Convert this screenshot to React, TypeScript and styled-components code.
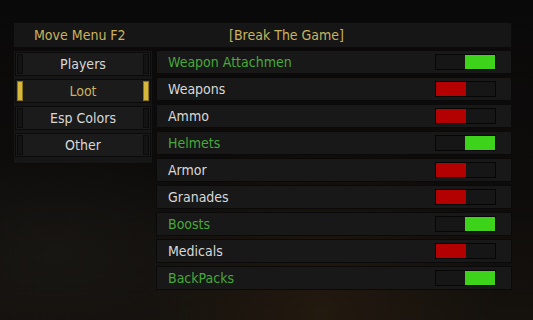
import styled, { createGlobalStyle } from "styled-components";

const GlobalStyle = createGlobalStyle`
  html, body {
    margin: 0;
    padding: 0;
  }
  body {
    width: 533px;
    height: 320px;
    overflow: hidden;
    background:
      radial-gradient(ellipse at 60% 98%, #22190f 0%, transparent 40%),
      radial-gradient(ellipse at 10% 80%, #181613 0%, transparent 30%),
      linear-gradient(180deg, #0a0909 0%, #0e0c0b 60%, #15110d 100%);
    font-family: "DejaVu Sans Condensed", "DejaVu Sans", sans-serif;
  }
`;

const Menu = styled.div`
  padding: 22px 0 0 13px;
  width: 499px;
`;

const Header = styled.div`
  height: 24px;
  display: flex;
  align-items: center;
  padding-left: 20px;
  background: #161616;
  border: 1px solid #0b0b0b;
  color: #c9b35e;
  font-size: 14px;
`;

const HeaderCell = styled.span<{ width?: number }>`
  width: ${(p) => (p.width ? `${p.width}px` : "auto")};
`;

const Body = styled.div`
  display: flex;
  gap: 3px;
  margin-top: 2px;
  align-items: flex-start;
`;

const Tabs = styled.div`
  width: 136px;
  padding: 1px 1px 6px;
  display: flex;
  flex-direction: column;
  gap: 3px;
  background: #161616;
  border: 1px solid #0b0b0b;
`;

const Tab = styled.div<{ active?: boolean }>`
  height: 22px;
  display: flex;
  align-items: center;
  justify-content: space-between;
  padding: 0 1px;
  background: #1b1b1b;
  border: 1px solid #0a0a0a;
  color: ${(p) => (p.active ? "#c9b35e" : "#d8d8d8")};
  font-size: 14px;
`;

const TabMark = styled.span<{ active?: boolean }>`
  width: 4px;
  height: 18px;
  background: ${(p) => (p.active ? "#d6b83a" : "#141414")};
  border: 1px solid ${(p) => (p.active ? "#8a7420" : "#0a0a0a")};
`;

const List = styled.div`
  width: 356px;
  display: flex;
  flex-direction: column;
  gap: 3px;
`;

const Row = styled.div<{ on?: boolean }>`
  height: 22px;
  display: flex;
  align-items: center;
  justify-content: space-between;
  padding: 0 15px 0 11px;
  background: #181818;
  border: 1px solid #0a0a0a;
  color: ${(p) => (p.on ? "#48a83a" : "#d8d8d8")};
  font-size: 14px;
`;

const Toggle = styled.div<{ on?: boolean }>`
  width: 59px;
  height: 14px;
  display: flex;
  justify-content: ${(p) => (p.on ? "flex-end" : "flex-start")};
  background: #161616;
  border: 1px solid #060606;
`;

const Knob = styled.div<{ on?: boolean }>`
  width: 30px;
  height: 100%;
  background: ${(p) => (p.on ? "#3ed31b" : "#b30000")};
`;

const tabs = ["Players", "Loot", "Esp Colors", "Other"];

const items: [string, boolean][] = [
  ["Weapon Attachmen", true],
  ["Weapons", false],
  ["Ammo", false],
  ["Helmets", true],
  ["Armor", false],
  ["Granades", false],
  ["Boosts", true],
  ["Medicals", false],
  ["BackPacks", true],
];

export default function App() {
  return (
    <>
      <GlobalStyle />
      <Menu>
        <Header>
          <HeaderCell width={195}>Move Menu F2</HeaderCell>
          <HeaderCell>[Break The Game]</HeaderCell>
        </Header>
        <Body>
          <Tabs>
            {tabs.map((t) => (
              <Tab key={t} active={t === "Loot"}>
                <TabMark active={t === "Loot"} />
                {t}
                <TabMark active={t === "Loot"} />
              </Tab>
            ))}
          </Tabs>
          <List>
            {items.map(([name, on]) => (
              <Row key={name} on={on}>
                {name}
                <Toggle on={on}>
                  <Knob on={on} />
                </Toggle>
              </Row>
            ))}
          </List>
        </Body>
      </Menu>
    </>
  );
}
